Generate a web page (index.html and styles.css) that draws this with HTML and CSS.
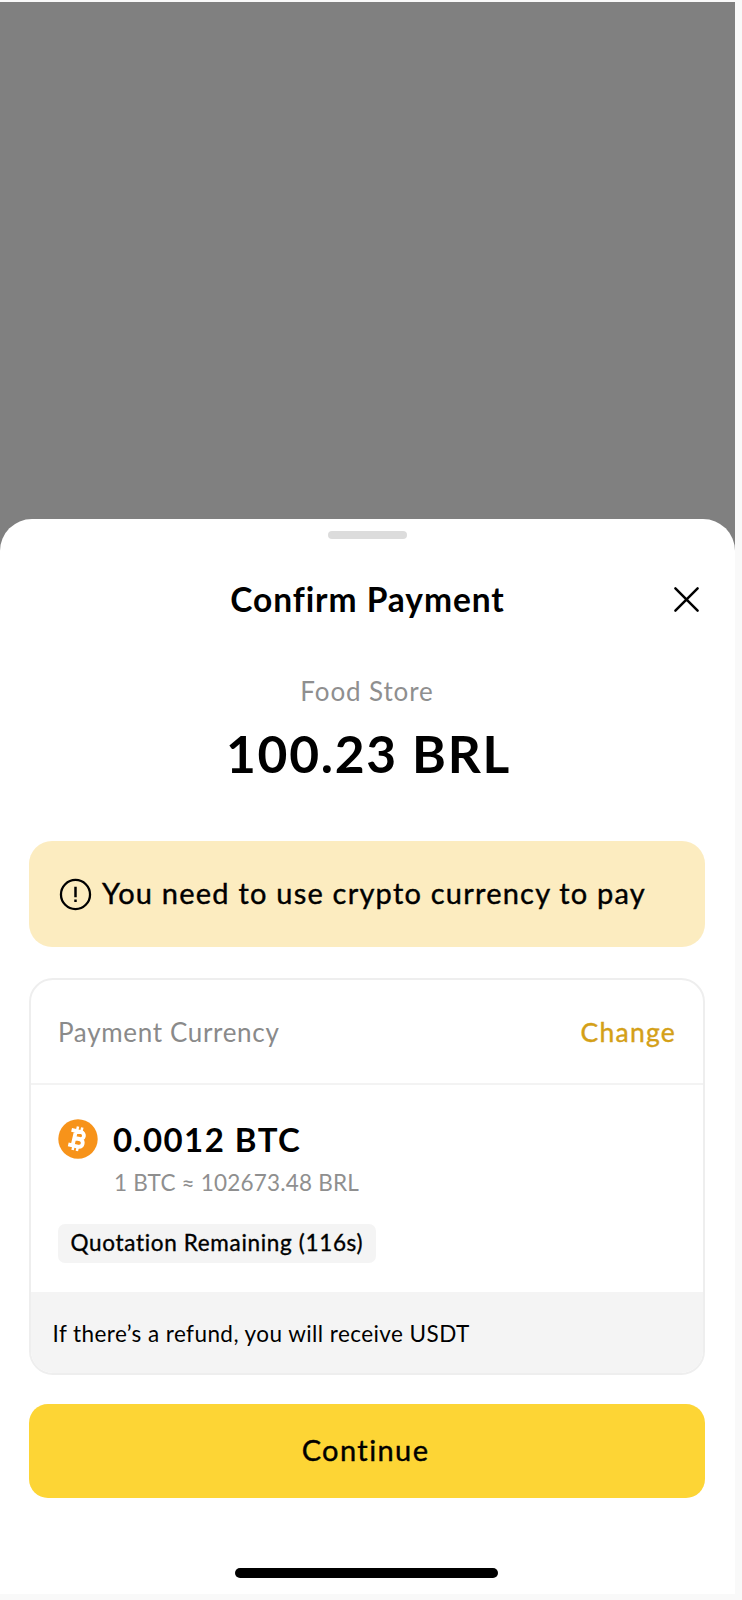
FILE: index.html
```html
<!DOCTYPE html>
<html lang="en">
<head>
<meta charset="utf-8">
<title>Confirm Payment</title>
<link rel="stylesheet" href="styles.css">
</head>
<body>
<div class="screen">
  <main class="sheet">
    <div class="handle"></div>
    <header class="header">
      <h1 class="title"><span>Confirm Payment</span></h1>
      <svg class="close" viewBox="0 0 26 26" fill="none" stroke="#000" stroke-width="2.4" stroke-linecap="round"><path d="M2.3 2.3 23.7 23.7M23.7 2.3 2.3 23.7"/></svg>
    </header>
    <p class="store"><span>Food Store</span></p>
    <p class="total"><span>100.23 BRL</span></p>

    <section class="notice">
      <svg class="notice-icon" viewBox="0 0 32 32" fill="none" stroke="#000" stroke-width="2.2"><circle cx="16" cy="16" r="14.1"/><path d="M16 8.6v10M16 20.8v2.5" stroke-width="2.4"/></svg>
      <span class="notice-text">You need to use crypto currency to pay</span>
    </section>

    <section class="card">
      <div class="card-head">
        <span class="label">Payment Currency</span>
        <a class="change">Change</a>
      </div>
      <div class="card-body">
        <div class="coin">
          <svg class="coin-icon" viewBox="0 0 40 40"><circle cx="20" cy="20" r="19.7" fill="#f7931a"/><g transform="rotate(13 20 20)" fill="none" stroke="#fff"><path d="M11.7 12.6H21.6a3.5 3.5 0 0 1 0 7H16.2M16.2 19.9H22.4a3.8 3.8 0 0 1 0 7.5H11.7M16.2 12.6V27.3" stroke-width="3.8"/><path d="M17.2 7.8v4M21.6 7.8v4M17.2 28v4M21.6 28v4" stroke-width="2.5"/></g></svg>
          <span class="coin-amount">0.0012 BTC</span>
        </div>
        <p class="rate"><span>1 BTC ≈ 102673.48 BRL</span></p>
        <span class="badge"><span>Quotation Remaining (116s)</span></span>
      </div>
      <div class="card-foot"><span class="refund">If there’s a refund, you will receive USDT</span></div>
    </section>

    <button class="continue"><span>Continue</span></button>
    <div class="home-bar"></div>
  </main>
</div>
</body>
</html>
```

FILE: styles.css
```css
* { box-sizing: border-box; }

body {
  margin: 0;
  background: #f9f9f9;
  font-family: Lato, "Open Sans", sans-serif;
  color: #000;
}

h1, p { margin: 0; }
svg { display: block; flex: none; }
span, a { white-space: nowrap; }

.screen {
  width: 735px;
  height: 1592px;
  margin-top: 2px;
  padding-top: 517px;
  background: #808080;
}

.sheet {
  display: flex;
  flex-direction: column;
  height: 1075px;
  padding: 12px 30px 0 29px;
  background: #fff;
  border-radius: 32px 32px 0 0;
}

.handle {
  align-self: center;
  width: 79px;
  height: 8px;
  border-radius: 4px;
  background: #dcdcdc;
}

.header {
  display: grid;
  grid-template-columns: 40px 1fr 40px;
  align-items: center;
  height: 48px;
  margin-top: 36px;
}

.title {
  grid-column: 2;
  padding-left: 1px;
  text-align: center;
  font-size: 33.5px;
  line-height: 48px;
  font-weight: 700;
  letter-spacing: 0.95px;
}

.close {
  width: 27px;
  height: 27px;
  margin: 1px 0 0 7.5px;
}

.store {
  margin-top: 50px;
  text-align: center;
  color: #8f8f8f;
  font-size: 26px;
  line-height: 36px;
  letter-spacing: 0.9px;
}

.total {
  margin-top: 12px;
  padding-left: 3px;
  text-align: center;
  font-size: 51.5px;
  line-height: 64px;
  font-weight: 700;
  letter-spacing: 1.7px;
}

.notice {
  display: flex;
  align-items: center;
  height: 106px;
  margin-top: 56px;
  padding-left: 30px;
  background: #fcecc0;
  border-radius: 23px;
}

.notice-icon {
  width: 33px;
  height: 33px;
}

.notice-text {
  margin: -2px 0 0 10px;
  font-size: 29px;
  line-height: 36px;
  letter-spacing: 1.22px;
  -webkit-text-stroke: 0.4px #000;
}

.card {
  height: 397px;
  margin-top: 31px;
  border: 2px solid #eee;
  border-radius: 24px;
  overflow: hidden;
}

.card-head {
  display: flex;
  align-items: center;
  justify-content: space-between;
  height: 105px;
  padding: 0 27px;
  border-bottom: 2px solid #f3f3f3;
  font-size: 26px;
}

.label {
  color: #8a8a8a;
  letter-spacing: 0.67px;
}

.change {
  color: #d4a017;
  font-size: 26.5px;
  letter-spacing: 1.25px;
  -webkit-text-stroke: 0.4px #d4a017;
}

.card-body {
  height: 207px;
  padding: 34px 27px 0;
}

.coin {
  display: flex;
  align-items: center;
  height: 40px;
}

.coin-icon {
  width: 40px;
  height: 40px;
}

.coin-amount {
  margin: -1px 0 0 15px;
  font-size: 33px;
  line-height: 40px;
  font-weight: 700;
  letter-spacing: 1.45px;
}

.rate {
  margin: 9px 0 0 56px;
  color: #8f8f8f;
  font-size: 22.5px;
  line-height: 30px;
  letter-spacing: 0.2px;
}

.badge {
  display: flex;
  align-items: center;
  width: 318px;
  height: 39px;
  margin-top: 26px;
  padding: 0 0 2px 12.5px;
  background: #f4f4f4;
  border-radius: 7px;
  font-size: 22.5px;
  letter-spacing: 0.67px;
  -webkit-text-stroke: 0.35px #000;
}

.card-foot {
  display: flex;
  align-items: center;
  height: 81px;
  padding: 1px 0 0 21.5px;
  background: #f4f4f4;
  font-size: 22.5px;
}

.refund { letter-spacing: 0.43px; }

.continue {
  height: 94px;
  margin-top: 29px;
  padding: 0 3px 2px 0;
  border: 0;
  border-radius: 19px;
  background: #fdd535;
  color: #000;
  font: 29px/36px Lato, "Open Sans", sans-serif;
  letter-spacing: 1.4px;
  -webkit-text-stroke: 0.4px #000;
}

.home-bar {
  align-self: center;
  width: 263px;
  height: 10px;
  margin: 70px 1px 0 0;
  border-radius: 5px;
  background: #000;
}
```
